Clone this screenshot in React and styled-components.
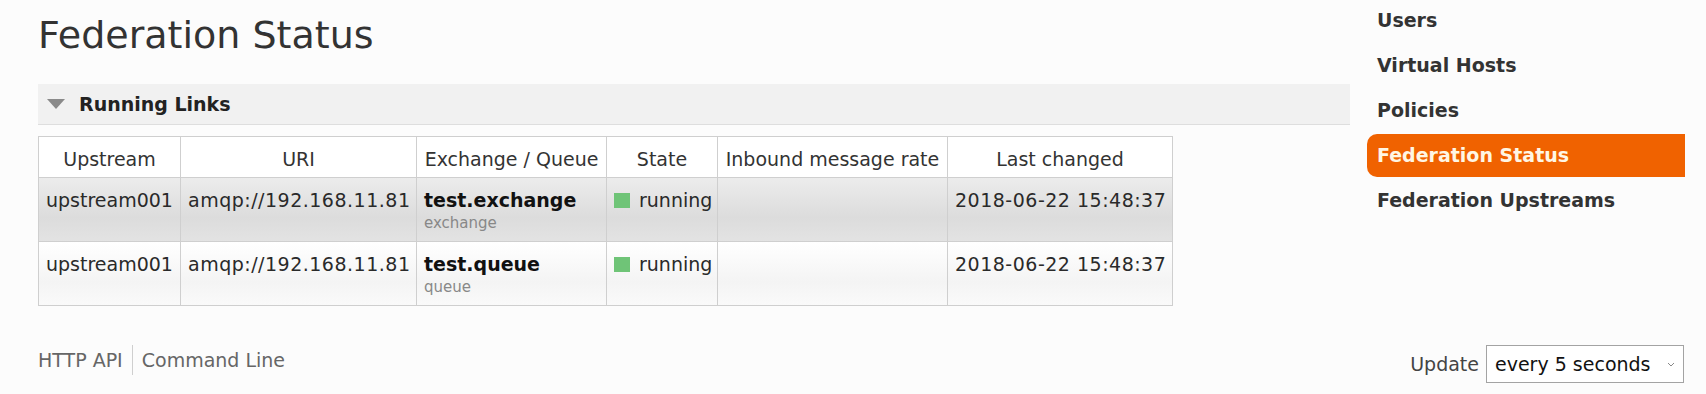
import React from "react";
import styled, { createGlobalStyle } from "styled-components";

const GlobalStyle = createGlobalStyle`
  html, body {
    margin: 0;
    padding: 0;
    background: #fcfcfc;
  }
  body {
    font-family: "DejaVu Sans", Verdana, sans-serif;
    color: #333;
  }
`;

const Page = styled.div`
  width: 1706px;
  height: 394px;
  overflow: hidden;
`;

const Top = styled.div`
  display: flex;
  gap: 17px;
  padding: 0 21px 0 38px;
`;

const Main = styled.main`
  flex: 1;
  min-width: 0;
`;

const Title = styled.h1`
  margin: 13px 0 0;
  font-size: 38px;
  line-height: 44px;
  font-weight: normal;
  color: #333;
`;

const Section = styled.section`
  margin-top: 27px;
`;

const SectionHead = styled.div`
  display: flex;
  align-items: center;
  gap: 14px;
  padding: 9px;
  background: #f1f1f1;
  border-bottom: 1px solid #dedede;
  font-size: 19px;
  line-height: 22px;
  font-weight: bold;
  color: #222;
`;

const Table = styled.table`
  margin-top: 11px;
  width: 1134px;
  table-layout: fixed;
  border-collapse: collapse;
  font-size: 19px;
  line-height: 22px;
`;

const Th = styled.th`
  padding: 11px 7px 7px;
  border: 1px solid #cfcfcf;
  background: #fff;
  font-weight: normal;
  text-align: center;
  color: #333;
  white-space: nowrap;
`;

const Row = styled.tr`
  background: ${(p) =>
    p.$alt
      ? "linear-gradient(#ececec 0%, #dcdcdc 62%, #e3e3e3 100%)"
      : "linear-gradient(#ffffff 0%, #f4f4f4 62%, #fafafa 100%)"};
`;

const Td = styled.td`
  padding: 11px 7px 9px;
  border: 1px solid #cfcfcf;
  vertical-align: top;
  text-align: left;
  color: #2a2a2a;
  white-space: nowrap;
  letter-spacing: ${(p) => (p.$wide ? "0.5px" : "normal")};
`;

const Name = styled.div`
  font-weight: bold;
  color: #111;
`;

const Sub = styled.div`
  margin-top: 3px;
  font-size: 15px;
  line-height: 18px;
  color: #888;
`;

const StateBox = styled.span`
  display: inline-block;
  width: 16px;
  height: 15px;
  margin-right: 9px;
  vertical-align: -1px;
  background: #6fc477;
`;

const Sidebar = styled.nav`
  width: 318px;
  flex-shrink: 0;
`;

const NavList = styled.ul`
  margin: -1.5px 0 0;
  padding: 0;
  list-style: none;
`;

const NavItem = styled.li`
  margin-bottom: 2px;
  padding: 10.5px 10px;
  font-size: 19px;
  line-height: 22px;
  font-weight: bold;
  color: ${(p) => (p.$active ? "#fff6e4" : "#333")};
  background: ${(p) => (p.$active ? "#f06200" : "transparent")};
  border-radius: 10px 0 0 10px;
`;

const Footer = styled.footer`
  display: flex;
  justify-content: space-between;
  align-items: flex-start;
  margin-top: 39px;
  padding: 0 22px 0 38px;
  font-size: 19px;
`;

const FooterLinks = styled.div`
  display: flex;
  line-height: 30px;
  color: #666;
`;

const FooterLink = styled.span`
  padding: 0 9px;
  &:first-child {
    padding-left: 0;
  }
  & + & {
    border-left: 1px solid #cfcfcf;
  }
`;

const Update = styled.label`
  display: flex;
  align-items: center;
  gap: 7px;
  color: #444;
`;

const SelectWrap = styled.div`
  position: relative;
  width: 198px;
  height: 38px;
`;

const Select = styled.select`
  appearance: none;
  box-sizing: border-box;
  width: 100%;
  height: 100%;
  margin: 0;
  padding: 0 28px 0 8px;
  border: 1px solid #a3a3a3;
  border-radius: 0;
  background: #fff;
  font-family: "DejaVu Sans", Verdana, sans-serif;
  font-size: 19px;
  color: #111;
`;

const Chevron = styled.svg`
  position: absolute;
  right: 9px;
  top: 17px;
  pointer-events: none;
`;

const columns = [
  { label: "Upstream", width: 142 },
  { label: "URI", width: 236 },
  { label: "Exchange / Queue", width: 190 },
  { label: "State", width: 111 },
  { label: "Inbound message rate", width: 230 },
  { label: "Last changed", width: 225 },
];

const links = [
  { upstream: "upstream001", uri: "amqp://192.168.11.81", name: "test.exchange", kind: "exchange", state: "running", changed: "2018-06-22 15:48:37" },
  { upstream: "upstream001", uri: "amqp://192.168.11.81", name: "test.queue", kind: "queue", state: "running", changed: "2018-06-22 15:48:37" },
];

const navItems = ["Users", "Virtual Hosts", "Policies", "Federation Status", "Federation Upstreams"];

function App() {
  return (
    <Page>
      <GlobalStyle />
      <Top>
        <Main>
          <Title>Federation Status</Title>
          <Section>
            <SectionHead>
              <svg width="18" height="10" viewBox="0 0 18 10">
                <polygon points="0,0 18,0 9,10" fill="#8a8a8a" />
              </svg>
              Running Links
            </SectionHead>
            <Table>
              <colgroup>
                {columns.map((c) => (
                  <col key={c.label} style={{ width: c.width }} />
                ))}
              </colgroup>
              <thead>
                <tr>
                  {columns.map((c) => (
                    <Th key={c.label}>{c.label}</Th>
                  ))}
                </tr>
              </thead>
              <tbody>
                {links.map((link, index) => (
                  <Row key={index} $alt={index % 2 === 0}>
                    <Td>{link.upstream}</Td>
                    <Td $wide>{link.uri}</Td>
                    <Td>
                      <Name>{link.name}</Name>
                      <Sub>{link.kind}</Sub>
                    </Td>
                    <Td>
                      <StateBox />
                      {link.state}
                    </Td>
                    <Td></Td>
                    <Td $wide>{link.changed}</Td>
                  </Row>
                ))}
              </tbody>
            </Table>
          </Section>
        </Main>
        <Sidebar>
          <NavList>
            {navItems.map((item) => (
              <NavItem key={item} $active={item === "Federation Status"}>
                {item}
              </NavItem>
            ))}
          </NavList>
        </Sidebar>
      </Top>
      <Footer>
        <FooterLinks>
          <FooterLink>HTTP API</FooterLink>
          <FooterLink>Command Line</FooterLink>
        </FooterLinks>
        <Update>
          Update
          <SelectWrap>
            <Select defaultValue="5">
              <option value="5">every 5 seconds</option>
              <option value="10">every 10 seconds</option>
              <option value="30">every 30 seconds</option>
            </Select>
            <Chevron width="8" height="5" viewBox="0 0 8 5">
              <polyline points="1,1 4,4 7,1" fill="none" stroke="#888" strokeWidth="1" />
            </Chevron>
          </SelectWrap>
        </Update>
      </Footer>
    </Page>
  );
}

export default App;
